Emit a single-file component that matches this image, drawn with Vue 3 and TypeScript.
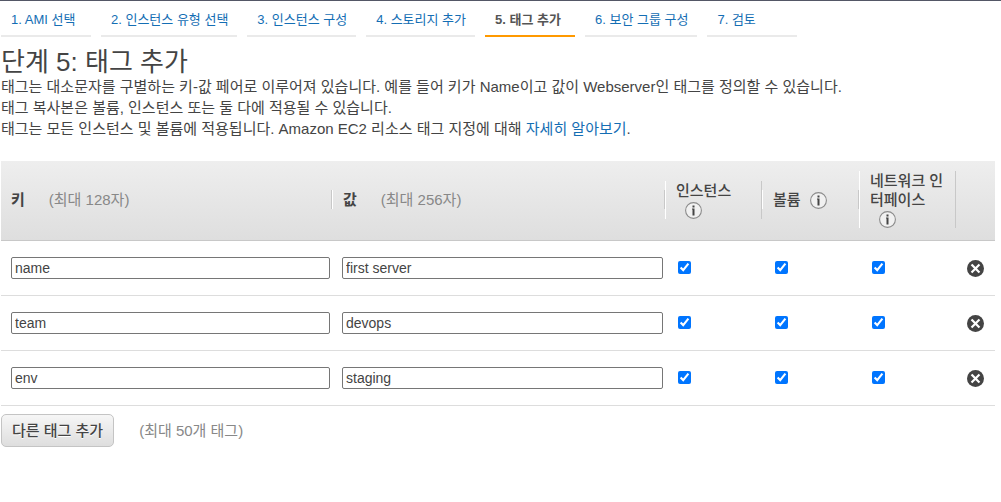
<script setup lang="ts">
import { ref } from 'vue'

interface TagRow {
  id: number
  key: string
  value: string
  instance: boolean
  volume: boolean
  network: boolean
}

const steps = [
  '1. AMI 선택',
  '2. 인스턴스 유형 선택',
  '3. 인스턴스 구성',
  '4. 스토리지 추가',
  '5. 태그 추가',
  '6. 보안 그룹 구성',
  '7. 검토',
]
const current = 4

const scopes = [
  { field: 'instance', label: '인스턴스' },
  { field: 'volume', label: '볼륨' },
  { field: 'network', label: '네트워크 인터페이스' },
] as const

let nextId = 4
const tags = ref<TagRow[]>([
  { id: 1, key: 'name', value: 'first server', instance: true, volume: true, network: true },
  { id: 2, key: 'team', value: 'devops', instance: true, volume: true, network: true },
  { id: 3, key: 'env', value: 'staging', instance: true, volume: true, network: true },
])

function addTag() {
  if (tags.value.length < 50) {
    tags.value.push({ id: nextId++, key: '', value: '', instance: true, volume: true, network: true })
  }
}

function removeTag(id: number) {
  tags.value = tags.value.filter((tag) => tag.id !== id)
}
</script>

<template>
  <div class="wizard">
    <nav class="steps">
      <a
        v-for="(step, i) in steps"
        :key="step"
        href="#"
        class="step"
        :class="{ active: i === current }"
        :aria-current="i === current ? 'step' : undefined"
      >{{ step }}</a>
    </nav>

    <main class="content">
      <h1 class="title">단계 5: 태그 추가</h1>
      <div class="intro">
        <p>태그는 대소문자를 구별하는 키-값 페어로 이루어져 있습니다. 예를 들어 키가 Name이고 값이 Webserver인 태그를 정의할 수 있습니다.</p>
        <p>태그 복사본은 볼륨, 인스턴스 또는 둘 다에 적용될 수 있습니다.</p>
        <p>태그는 모든 인스턴스 및 볼륨에 적용됩니다. Amazon EC2 리소스 태그 지정에 대해 <a href="#">자세히 알아보기</a>.</p>
      </div>

      <table class="tags">
        <colgroup>
          <col class="col-key">
          <col>
          <col class="col-scope">
          <col class="col-scope">
          <col class="col-scope">
          <col class="col-remove">
        </colgroup>
        <thead>
          <tr>
            <th scope="col"><div class="head first"><b>키</b><span class="limit">(최대 128자)</span></div></th>
            <th scope="col"><div class="head"><b>값</b><span class="limit">(최대 256자)</span></div></th>
            <th v-for="scope in scopes" :key="scope.field" scope="col">
              <div class="head scope">{{ scope.label }}<svg class="info" viewBox="0 0 17 17" aria-hidden="true">
                <circle cx="8.5" cy="8.5" r="7.9" fill="#f1f1f1" stroke="#8c8c8c" stroke-width="1.1" />
                <path d="M7.5 3.5h2v2h-2zM7 6.5h2.5v7h-2v-6H7z" fill="#444" />
              </svg></div>
            </th>
            <td></td>
          </tr>
        </thead>
        <tbody>
          <tr v-for="tag in tags" :key="tag.id">
            <td><input v-model="tag.key" class="field" type="text" maxlength="128" aria-label="키"></td>
            <td><input v-model="tag.value" class="field" type="text" maxlength="256" aria-label="값"></td>
            <td v-for="scope in scopes" :key="scope.field" class="check">
              <input v-model="tag[scope.field]" type="checkbox" :aria-label="scope.label">
            </td>
            <td>
              <button class="remove" type="button" aria-label="태그 제거" @click="removeTag(tag.id)">
                <svg viewBox="0 0 17 17" aria-hidden="true">
                  <circle cx="8.5" cy="8.5" r="8.5" fill="#444" />
                  <path d="M5.3 5.3l6.4 6.4M11.7 5.3l-6.4 6.4" stroke="#fff" stroke-width="2.2" stroke-linecap="square" />
                </svg>
              </button>
            </td>
          </tr>
        </tbody>
      </table>

      <div class="footer">
        <button class="add" type="button" @click="addTag">다른 태그 추가</button>
        <span class="note">(최대 50개 태그)</span>
      </div>
    </main>
  </div>
</template>

<style>
body {
  background: #fff;
}
</style>

<style scoped>
.wizard {
  border-top: 1px solid #545766;
  color: #444;
  font-family: "Liberation Sans", "Noto Sans CJK KR", sans-serif;
  font-size: 15px;
  line-height: 21px;
}

a {
  color: #146eb4;
  text-decoration: none;
}

.steps {
  display: flex;
  flex-wrap: wrap;
  gap: 10px;
  padding: 9px 1px 0;
}

.step {
  box-sizing: border-box;
  min-width: 90px;
  height: 27px;
  padding: 0 9px 0 10px;
  border-bottom: 2px solid #eaeaea;
  font-size: 13px;
  line-height: 20px;
  white-space: nowrap;
}

.step.active {
  border-color: #f90;
  color: #555;
  font-weight: bold;
}

.content {
  padding: 12px 6px 0 1px;
}

.title {
  margin: 0;
  font-size: 26px;
  font-weight: normal;
  line-height: 27px;
}

.intro p {
  margin: 0;
}

.tags {
  width: 100%;
  margin-top: 22px;
  border-collapse: separate;
  border-spacing: 0;
  table-layout: fixed;
}

.col-key {
  width: 331px;
}

.col-scope {
  width: 97px;
}

.col-remove {
  width: 39px;
}

thead tr {
  background: linear-gradient(#eee, #dedede);
}

thead th,
thead td {
  height: 77px;
  padding: 0 0 2px;
  border-bottom: 1px solid #c8c8c8;
  font-weight: normal;
  text-align: left;
  vertical-align: middle;
}

.head {
  padding: 0 10px;
  border-left: 1px solid #fff;
  border-right: 1px solid #c8c8c8;
  line-height: 19px;
}

.head.first {
  border-left: 0;
}

.head.scope {
  font-weight: 500;
  word-break: break-all;
}

.limit {
  margin-left: 24px;
  color: #888;
}

.info {
  width: 17px;
  height: 17px;
  margin-left: 9px;
  vertical-align: -4px;
}

tbody td {
  height: 54px;
  padding: 0;
  border-bottom: 1px solid #ddd;
  vertical-align: middle;
}

.field {
  display: block;
  box-sizing: border-box;
  width: calc(100% - 12px);
  height: 22px;
  margin: 0 2px 0 10px;
  padding: 1px 3px;
  border: 1px solid #767676;
  border-radius: 2px;
  background: #fff;
  color: #444;
  font: inherit;
  font-size: 14px;
  line-height: 18px;
}

.check input {
  display: block;
  width: 13px;
  height: 13px;
  margin: 0 0 2px 13px;
}

.remove {
  display: block;
  width: 17px;
  height: 17px;
  margin-left: 11px;
  padding: 0;
  border: 0;
  background: none;
}

.remove svg {
  display: block;
}

.footer {
  display: flex;
  align-items: center;
  gap: 25px;
  margin-top: 8px;
}

.add {
  height: 33px;
  padding: 0 10px;
  border: 1px solid #c4c4c4;
  border-radius: 5px;
  background: linear-gradient(#f6f6f6, #dedede);
  color: #444;
  font: inherit;
  font-weight: 500;
  text-shadow: 0 1px 0 #fff;
}

.note {
  color: #888;
}
</style>
